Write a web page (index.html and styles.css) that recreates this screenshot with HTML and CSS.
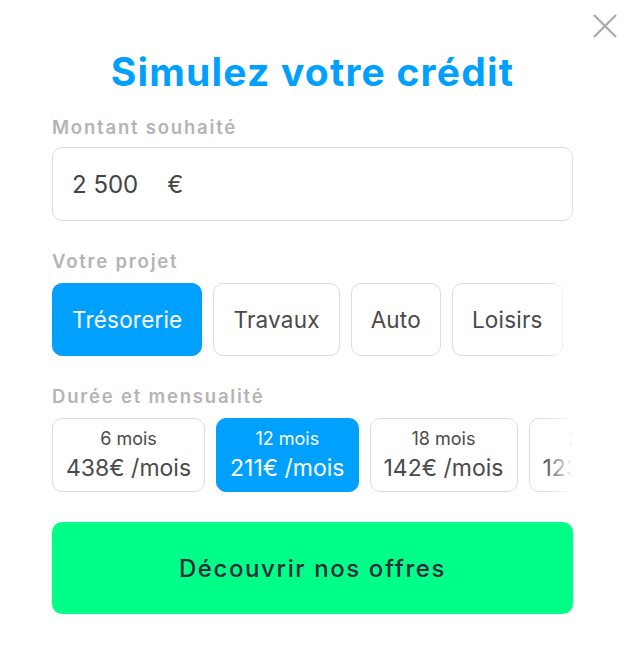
FILE: index.html
```html
<!DOCTYPE html>
<html lang="fr">
<head>
    <meta charset="UTF-8">
    <meta name="viewport" content="width=device-width, initial-scale=1.0">
    <title>Simulez votre crédit</title>
    <link rel="stylesheet" href="styles.css">
</head>
<body>
    <div class="modal">
        <button class="close" aria-label="Fermer">
            <svg width="24" height="24" viewBox="0 0 24 24"><path d="M1 1L23 23M23 1L1 23" stroke="#aaaaaa" stroke-width="2.2" fill="none"/></svg>
        </button>

        <h1>Simulez votre crédit</h1>

        <!-- Montant -->
        <label class="label" for="amount">Montant souhaité</label>
        <div class="amount">
            <span class="value">2 500</span>
            <span class="currency">€</span>
        </div>

        <!-- Projet -->
        <div class="label label-gap">Votre projet</div>
        <div class="chips">
            <button class="chip active">Trésorerie</button>
            <button class="chip">Travaux</button>
            <button class="chip">Auto</button>
            <button class="chip">Loisirs</button>
            <button class="chip">Autres</button>
        </div>

        <!-- Durée -->
        <div class="label label-gap">Durée et mensualité</div>
        <div class="chips">
            <button class="duration"><span class="months">6 mois</span><span class="monthly">438€ /mois</span></button>
            <button class="duration active"><span class="months">12 mois</span><span class="monthly">211€ /mois</span></button>
            <button class="duration"><span class="months">18 mois</span><span class="monthly">142€ /mois</span></button>
            <button class="duration"><span class="months">24 mois</span><span class="monthly">123€ /mois</span></button>
        </div>

        <button class="cta">Découvrir nos offres</button>
    </div>
</body>
</html>
```

FILE: styles.css
```css
body {
    margin: 0;
    background: #ffffff;
    font-family: Inter, "Noto Sans", sans-serif;
    color: #444444;
}
.modal {
    position: relative;
    padding: 49px 54px 40px 52px;
}
.close {
    position: absolute;
    top: 14px;
    right: 10px;
    padding: 0;
    border: none;
    background: none;
    cursor: pointer;
    line-height: 0;
}
h1 {
    margin: 0;
    text-align: center;
    font-size: 39px;
    line-height: 46px;
    font-weight: 700;
    letter-spacing: 1.2px;
    color: #00a0fe;
}
.label {
    display: block;
    margin-top: 21px;
    font-size: 18.5px;
    line-height: 22px;
    font-weight: 600;
    letter-spacing: 1.8px;
    color: #b4b4b4;
}
.label-gap {
    margin-top: 29px;
}
.amount {
    margin-top: 9px;
    height: 72px;
    border: 1px solid #dddddd;
    border-radius: 10px;
    display: flex;
    align-items: center;
    padding: 0 19px;
    font-size: 24px;
    color: #444444;
}
.currency {
    margin-left: 29px;
}
.chips {
    position: relative;
    display: flex;
    gap: 11px;
    margin-top: 11px;
    margin-right: -7px;
    overflow: hidden;
}
.chips::after {
    content: "";
    position: absolute;
    top: 0;
    right: 0;
    bottom: 0;
    width: 36px;
    background: linear-gradient(to right, rgba(255, 255, 255, 0), #ffffff 80%);
}
.chip,
.duration {
    flex: none;
    border: 1px solid #dddddd;
    border-radius: 10px;
    background: #ffffff;
    color: #4a4a4a;
    font-family: inherit;
    cursor: pointer;
}
.chip {
    height: 73px;
    padding: 0 19px;
    font-size: 22.5px;
    letter-spacing: 0.2px;
}
.duration {
    height: 74px;
    padding: 0 13px;
    display: flex;
    flex-direction: column;
    align-items: center;
    justify-content: center;
}
.months {
    font-size: 18px;
    line-height: 26px;
}
.monthly {
    font-size: 23px;
    line-height: 32px;
}
.chip.active,
.duration.active {
    background: #00a0fe;
    border-color: #00a0fe;
    color: #ffffff;
}
.cta {
    display: block;
    width: 100%;
    height: 92px;
    margin-top: 30px;
    border: none;
    border-radius: 10px;
    background: #00ff88;
    color: #2b2b3a;
    font-family: inherit;
    font-size: 24px;
    font-weight: 500;
    letter-spacing: 1.6px;
    cursor: pointer;
}
```
